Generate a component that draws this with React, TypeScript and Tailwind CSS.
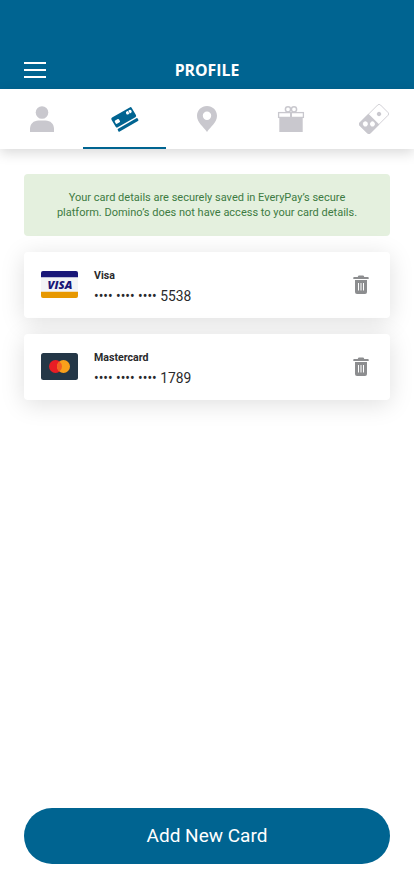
import { useState } from "react";

const cards = [
  { id: 1, brand: "Visa", last4: "5538" },
  { id: 2, brand: "Mastercard", last4: "1789" },
];

function PersonIcon() {
  return (
    <svg width="30" height="30" viewBox="0 0 30 30" fill="currentColor">
      <circle cx="15" cy="8.500" r="6.300" />
      <path d="M3 28v-3c0-5 3.500-8.500 8.500-8.500h7c5 0 8.500 3.500 8.500 8.500v3z" />
    </svg>
  );
}

function CardIcon() {
  return (
    <svg width="30" height="30" viewBox="0 0 30 30">
      <g transform="rotate(-30 15 15)">
        <rect x="3" y="7.300" width="23.400" height="11.300" rx="1.500" fill="currentColor" />
        <rect x="3.200" y="20" width="23" height="3.200" rx="1" fill="currentColor" />
        <rect x="4.800" y="11.500" width="4.800" height="3.600" rx="0.900" fill="#fff" />
        <circle cx="20.400" cy="11" r="1.700" fill="#fff" />
        <circle cx="23.100" cy="11" r="1.700" fill="#fff" />
        <path d="M21.800 9.800v2.400" stroke="currentColor" strokeWidth="0.500" />
      </g>
    </svg>
  );
}

function PinIcon() {
  return (
    <svg width="30" height="30" viewBox="0 0 30 30" fill="currentColor">
      <path fillRule="evenodd" d="M15 2C9.400 2 5 6.300 5 11.700 5 18.500 11.500 22.500 15 28c3.500-5.500 10-9.500 10-16.300C25 6.300 20.600 2 15 2zm0 5.500a4.200 4.200 0 1 1 0 8.400 4.200 4.200 0 0 1 0-8.400z" />
    </svg>
  );
}

function GiftIcon() {
  return (
    <svg width="30" height="30" viewBox="0 0 30 30" fill="none" stroke="currentColor" className="ml-0.5">
      <rect x="3.300" y="13" width="23.400" height="15" fill="currentColor" stroke="none" />
      <rect x="2.600" y="8.600" width="24.800" height="4.800" strokeWidth="1.300" />
      <path d="M15 8v6" strokeWidth="2" />
      <circle cx="12" cy="5.300" r="2.600" strokeWidth="1.500" />
      <circle cx="18" cy="5.300" r="2.600" strokeWidth="1.500" />
    </svg>
  );
}

function DominoIcon() {
  return (
    <svg width="30" height="30" viewBox="0 0 30 30" className="ml-0.5">
      <g transform="rotate(-45 15 15)">
        <rect x="0.500" y="7.700" width="29" height="14.600" rx="2" fill="#fff" stroke="currentColor" strokeWidth="0.800" />
        <path d="M2.400 7.300h12.400v15.400H2.400a2.300 2.300 0 0 1-2.300-2.300V9.600a2.300 2.300 0 0 1 2.300-2.300z" fill="currentColor" />
        <circle cx="5.400" cy="12.400" r="2.500" fill="#fff" />
        <circle cx="10.400" cy="17.400" r="2.500" fill="#fff" />
        <circle cx="22.100" cy="15" r="2.200" fill="currentColor" />
      </g>
    </svg>
  );
}

function TrashIcon() {
  return (
    <svg width="16" height="20" viewBox="0 0 16 20">
      <path d="M5 1.200Q5.200 0.500 6 0.500h4q.8 0 1 .7l.2.800H15q.7 0 .7.700V4H.3V2.700Q.3 2 1 2h3.800z" fill="#8c8d8f" />
      <path d="M2 5h12v12q0 2-2 2H4q-2 0-2-2z" fill="#8c8d8f" />
      <path d="M5.500 8v7.500M8 8v7.500M10.500 8v7.500" stroke="#fff" strokeWidth="1" />
    </svg>
  );
}

function VisaLogo() {
  return (
    <svg width="37" height="27" viewBox="0 0 37 27">
      <path d="M2 0h33a2 2 0 0 1 2 2v4.500H0V2a2 2 0 0 1 2-2z" fill="#191778" />
      <path d="M0 6.500h37v14.300H0z" fill="#f3f4f6" />
      <path d="M0 20.800h37V25a2 2 0 0 1-2 2H2a2 2 0 0 1-2-2z" fill="#e79800" />
      <text x="6.500" y="17.800" textLength="24.800" lengthAdjust="spacingAndGlyphs" fontFamily="Open Sans, sans-serif" fontSize="11" fontWeight="800" fontStyle="italic" fill="#191778">VISA</text>
    </svg>
  );
}

function MastercardLogo() {
  return (
    <svg width="37" height="27" viewBox="0 0 37 27">
      <rect width="37" height="27" rx="2.500" fill="#243747" />
      <circle cx="14.500" cy="13.500" r="6.500" fill="#e91d25" />
      <circle cx="22.500" cy="13.500" r="6.500" fill="#f9a01b" />
      <path d="M18.500 8.380a6.500 6.500 0 0 1 0 10.240 6.500 6.500 0 0 1 0-10.240z" fill="#f26122" />
    </svg>
  );
}

const tabs = [
  { id: "account", label: "Account", icon: <PersonIcon /> },
  { id: "cards", label: "Cards", icon: <CardIcon /> },
  { id: "addresses", label: "Addresses", icon: <PinIcon /> },
  { id: "rewards", label: "Rewards", icon: <GiftIcon /> },
  { id: "coupons", label: "Coupons", icon: <DominoIcon /> },
];

export default function App() {
  const [active, setActive] = useState("cards");

  return (
    <div className="flex min-h-screen flex-col bg-white font-['Roboto',sans-serif]">
      <header className="grid h-[89px] grid-cols-[1fr_auto_1fr] items-end bg-[#006491] px-6 pb-2">
        <button aria-label="Menu" className="mb-[3px] flex w-[22px] flex-col gap-[5px]">
          <span className="h-0.5 w-full bg-white" />
          <span className="h-0.5 w-full bg-white" />
          <span className="h-0.5 w-full bg-white" />
        </button>
        <h1 className="font-['Open_Sans',sans-serif] text-[15.8px] leading-[22px] font-bold text-white">PROFILE</h1>
      </header>

      <nav className="grid h-[60px] grid-cols-5 bg-white shadow-[0_4px_12px_rgba(0,0,0,0.15)]">
        {tabs.map((tab) => (
          <button
            key={tab.id}
            aria-label={tab.label}
            onClick={() => setActive(tab.id)}
            className={
              active === tab.id
                ? "flex items-center justify-center border-b-2 border-[#006491] pt-0.5 pl-px text-[#006491]"
                : "flex items-center justify-center pl-px text-[#c9c8ce]"
            }
          >
            {tab.icon}
          </button>
        ))}
      </nav>

      <main className="flex flex-1 flex-col px-6 pt-[25px] pb-8">
        <p className="flex h-[62px] items-center justify-center rounded-[4px] bg-[#e4f0de] text-center text-[11px] leading-[15px] text-[#3d7b42]">
          <span>
            Your card details are securely saved in EveryPay’s secure
            <br />
            platform. Domino’s does not have access to your card details.
          </span>
        </p>

        <ul className="mt-4 flex flex-col gap-4">
          {cards.map((card) => (
            <li key={card.id} className="flex h-[66px] items-center rounded-[4px] bg-white pr-[21px] pb-px pl-[17px] shadow-[0_4px_24px_rgba(0,0,0,0.13)]">
              {card.brand === "Visa" ? <VisaLogo /> : <MastercardLogo />}
              <div className="ml-4 flex-1 pt-1 text-[#29292b]">
                <div className="text-[10.6px] leading-[15px] font-bold">{card.brand}</div>
                <div className="mt-1 flex items-center gap-[3.5px] text-[13.8px] leading-[18px]">
                  <span>•••• •••• ••••</span>
                  <span>{card.last4}</span>
                </div>
              </div>
              <button aria-label="Delete card">
                <TrashIcon />
              </button>
            </li>
          ))}
        </ul>

        <button className="mt-auto h-14 rounded-full bg-[#006491] text-[19px] text-white">Add New Card</button>
      </main>
    </div>
  );
}
